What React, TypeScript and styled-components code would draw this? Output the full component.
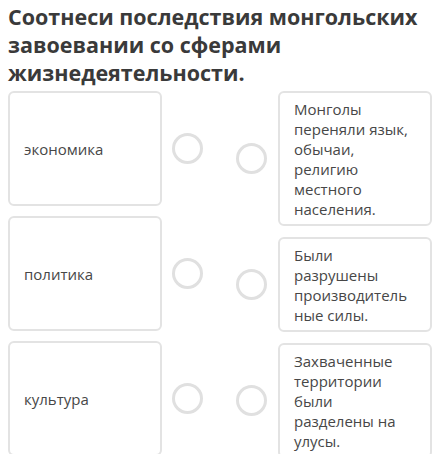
import React from "react";
import styled, { createGlobalStyle } from "styled-components";

const Global = createGlobalStyle`
  html, body { margin: 0; padding: 0; background: #ffffff; }
  body { font-family: "Open Sans", "Noto Sans", sans-serif; }
  * { box-sizing: border-box; }
`;

const Page = styled.div`
  width: 442px;
  height: 454px;
  overflow: hidden;
  padding: 3px 8px 0 8px;
`;

const Title = styled.h1`
  margin: 0 0 4px 0;
  font-size: 21.5px;
  line-height: 28px;
  font-weight: 700;
  color: #3a3a3a;
`;

const Board = styled.div`
  display: flex;
  gap: 33px;
  align-items: flex-start;
`;

const Column = styled.div<{ $gap: number }>`
  display: flex;
  flex-direction: column;
  gap: ${(p) => p.$gap}px;
`;

const Item = styled.div<{ $gap: number }>`
  display: flex;
  align-items: center;
  gap: ${(p) => p.$gap}px;
`;

const Card = styled.div<{ $fixed?: boolean }>`
  width: 154px;
  ${(p) => (p.$fixed ? "height: 115px;" : "")}
  border: 2px solid #e3e3e3;
  border-radius: 6px;
  padding: 6px 18px 5px 14px;
  display: flex;
  align-items: center;
  font-size: 15px;
  line-height: 20px;
  color: #474747;
  overflow-wrap: break-word;
  word-break: break-word;
`;

const Dot = styled.div`
  width: 31px;
  height: 31px;
  flex: none;
  border-radius: 50%;
  border: 3px solid #e0e0e0;
`;

const left = ["экономика", "политика", "культура"];
const right = [
  "Монголы переняли язык, обычаи, религию местного населения.",
  "Были разрушены производительные силы.",
  "Захваченные территории были разделены на улусы.",
];

export default function App() {
  return (
    <Page>
      <Global />
      <Title>Соотнеси последствия монгольских завоевании со сферами жизнедеятельности.</Title>
      <Board>
        <Column $gap={10}>
          {left.map((t) => (
            <Item key={t} $gap={10}>
              <Card $fixed>{t}</Card>
              <Dot />
            </Item>
          ))}
        </Column>
        <Column $gap={11}>
          {right.map((t) => (
            <Item key={t} $gap={11}>
              <Dot />
              <Card>{t}</Card>
            </Item>
          ))}
        </Column>
      </Board>
    </Page>
  );
}
